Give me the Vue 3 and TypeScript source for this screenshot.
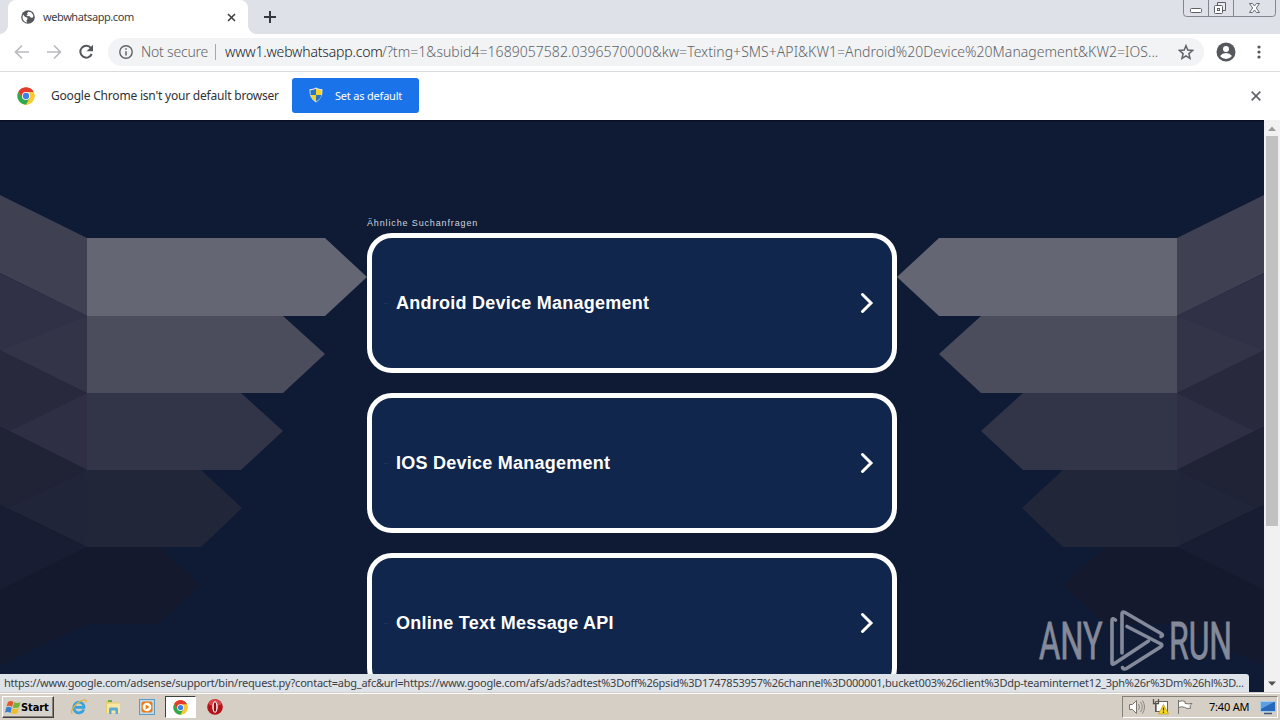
<script setup lang="ts">
interface Shape { points: string; fill: string }

const searches: string[] = [
  'Android Device Management',
  'IOS Device Management',
  'Online Text Message API',
]

// One wing of the folded-ribbon backdrop; the other side is its mirror.
const wing: Shape[] = [
  { points: '0,470 87,427 159,427 201,465 159,504 87,504 0,545', fill: '#14192d' },
  { points: '0,75 87,118 87,196 0,153', fill: '#3f4052' },
  { points: '0,153 87,196 87,273 0,230', fill: '#303146' },
  { points: '87,196 0,231 87,273', fill: '#333448' },
  { points: '0,230 87,273 87,350 0,307', fill: '#28293d' },
  { points: '87,273 10,311 87,350', fill: '#2e2f44' },
  { points: '0,307 87,350 87,427 0,385', fill: '#202235' },
  { points: '87,350 8,388 87,427', fill: '#212539' },
  { points: '0,385 87,427 0,470', fill: '#191d33' },
  { points: '87,118 325,118 367,157 325,196 87,196', fill: '#646673' },
  { points: '87,196 283,196 325,234 283,273 87,273', fill: '#4b4d5c' },
  { points: '87,273 241,273 283,311 241,350 87,350', fill: '#323548' },
  { points: '87,350 201,350 242,388 201,427 87,427', fill: '#222639' },
]
</script>

<template>
  <div class="screen">
    <svg class="defs" width="0" height="0">
      <defs>
        <symbol id="chrome-logo" viewBox="0 0 48 48">
          <circle cx="24" cy="24" r="23" fill="#fbc116" />
          <path d="M24 24 4.1 12.5A23 23 0 0 1 43.9 12.5H24z" fill="#e33b2e" />
          <path d="M4.1 12.5A23 23 0 0 0 24 47L34 29.8 24 24 14 29.8z" fill="#2da94f" />
          <path d="M24 13.5H44.5A23 23 0 0 1 24 47l10-17.2z" fill="#fcc934" />
          <path d="M4.1 12.5A23 23 0 0 1 44.4 13.5H24L14 29.8z" fill="#e33b2e" />
          <circle cx="24" cy="24" r="10.8" fill="#fff" />
          <circle cx="24" cy="24" r="8.4" fill="#3f7fe8" />
        </symbol>
      </defs>
    </svg>

    <header class="tabstrip">
      <div class="tab">
        <svg class="globe" width="14" height="14" viewBox="0 0 14 14">
          <circle cx="7" cy="7" r="6.8" fill="#54585d" />
          <path d="M2 4.5 4.2 7l2 .5.3 1.8-1 1 .4 2.4C3.300 12 1.600 9.800 1.500 7.200zM7.300 1.700 6 3.500l.7 1.200-1.500 1.200 3.500.3 1.200 1.600 2-.2.500-1.500C12 3.500 10 1.600 7.300 1.700z" fill="#fff" />
        </svg>
        <span class="tab-title">webwhatsapp.com</span>
        <svg class="tab-close" width="9" height="9" viewBox="0 0 9 9"><path d="M1 1l7 7M8 1 1 8" stroke="#3c4043" stroke-width="1.6" /></svg>
      </div>
      <svg class="plus" width="12" height="12" viewBox="0 0 12 12"><path d="M6 0v12M0 6h12" stroke="#35393d" stroke-width="2" /></svg>
      <svg class="winbuttons" width="94" height="18" viewBox="0 0 94 18">
        <path d="M.5 0v13.500q0 3 3 3h86q3 0 3-3V0M25.500 0v16.500M50.500 0v16.500" fill="none" stroke="#82868e" />
        <rect x="7.500" y="8.500" width="11" height="4" rx="1" fill="#fff" stroke="#5b5f68" />
        <path d="M34.500 5.500v-3h8v8h-3" fill="#e9ebef" stroke="#5b5f68" />
        <rect x="31.500" y="5.500" width="8" height="8" rx="1" fill="#fff" stroke="#5b5f68" />
        <rect x="34.500" y="8.500" width="2" height="2" fill="none" stroke="#5b5f68" />
        <path d="M66.500 3.500h3l2 2.500 2-2.500h3l-3.200 4.500 3.200 4.500h-3l-2-2.500-2 2.500h-3L69.700 8z" fill="#fff" stroke="#666a72" />
      </svg>
    </header>

    <div class="toolbar">
      <svg class="nav" width="100" height="20" viewBox="0 0 100 20">
        <path d="M29 10H15.800M22 3.500 15.500 10l6.500 6.500M47 10h13.200M54 3.500 60.500 10 54 16.500" fill="none" stroke="#b9bbbe" stroke-width="1.700" />
        <path d="M91 6.200A5.900 5.900 0 1 0 91.700 12" fill="none" stroke="#54585d" stroke-width="2" />
        <path d="M93 2.800v6.400h-6.400z" fill="#54585d" />
      </svg>
      <div class="omnibox">
        <svg class="info" width="14" height="14" viewBox="0 0 14 14"><circle cx="7" cy="7" r="6.200" fill="none" stroke="#5f6368" stroke-width="1.400" /><path d="M7 6.200v4.300M7 3.300v1.500" stroke="#5f6368" stroke-width="1.500" /></svg>
        <span class="insecure">Not secure</span>
        <i class="divider"></i>
        <span class="host">www1.webwhatsapp.com</span><span class="query">/?tm=1&amp;subid4=1689057582.0396570000&amp;kw=Texting+SMS+API&amp;KW1=Android%20Device%20Management&amp;KW2=IOS...</span>
        <svg class="star" width="16" height="16" viewBox="0 0 16 16"><path d="m8 1.700 1.800 4.400 4.700.4-3.600 3.100 1.100 4.700L8 11.800l-4 2.500 1.100-4.700L1.500 6.500l4.700-.4z" fill="none" stroke="#5f6368" stroke-width="1.500" /></svg>
      </div>
      <svg class="avatar" width="20" height="20" viewBox="0 0 20 20"><circle cx="10" cy="10" r="9.500" fill="#54585d" /><circle cx="10" cy="7" r="3" fill="#fff" /><path d="M4 14q2.300-3 6-3t6 3q-2.300 3-6 3t-6-3" fill="#fff" /></svg>
      <svg class="menu" width="4" height="14" viewBox="0 0 4 14"><g fill="#54585d"><circle cx="2" cy="2" r="1.600" /><circle cx="2" cy="7" r="1.600" /><circle cx="2" cy="12" r="1.600" /></g></svg>
    </div>

    <div class="infobar">
      <svg class="logo" width="18" height="18"><use href="#chrome-logo" /></svg>
      <span class="notice">Google Chrome isn't your default browser</span>
      <button class="default-btn">
        <svg width="14" height="16" viewBox="0 0 14 16">
          <path d="M7 .5Q9.500 2.300 13.500 2.300 14 11.500 7 15.500 0 11.500.5 2.300 4.500 2.300 7 .5z" fill="#e6e8e4" />
          <path d="M7 1.800V8H1.500V3.200Q4.800 3.200 7 1.800z" fill="#2b73c7" />
          <path d="M7 1.800V8h5.500V3.200Q9.200 3.200 7 1.800z" fill="#f5d32d" />
          <path d="M7 8H1.600Q2.300 12 7 14.500z" fill="#f5d32d" />
          <path d="M7 8h5.400Q11.700 12 7 14.500z" fill="#2b73c7" />
        </svg>
        <span>Set as default</span>
      </button>
      <svg class="info-close" width="10" height="10" viewBox="0 0 10 10"><path d="m.7.7 8.600 8.600M9.300.7.700 9.300" stroke="#5f6368" stroke-width="1.700" /></svg>
    </div>

    <div class="viewport">
      <main class="page">
        <svg class="backdrop" width="1264" height="572" viewBox="0 0 1264 572">
          <g><polygon v-for="s in wing" :key="s.points" :points="s.points" :fill="s.fill" /></g>
          <g transform="translate(1264 0) scale(-1 1)"><polygon v-for="s in wing" :key="s.points" :points="s.points" :fill="s.fill" /></g>
        </svg>
        <section class="results">
          <p class="caption">Ähnliche Suchanfragen</p>
          <a v-for="term in searches" :key="term" class="card">
            <i class="tick"></i>
            <span class="term">{{ term }}</span>
            <svg width="14" height="22" viewBox="0 0 14 22"><path d="m2.500 2.500 8.500 8.500-8.500 8.500" fill="none" stroke="#fff" stroke-width="3" stroke-linecap="round" /></svg>
          </a>
        </section>
        <svg class="watermark" width="216" height="82" viewBox="1027 600 216 82">
          <g fill="#858a9a" stroke="#858a9a" stroke-width=".8" font-family="Roboto, sans-serif" font-size="51">
            <text transform="translate(1039 659) scale(.64 1)">ANY</text>
            <text transform="translate(1169 659) scale(.625 1)">RUN</text>
          </g>
          <g fill="none" stroke="#858a9a" stroke-width="3.600" stroke-linecap="round" stroke-linejoin="round">
            <path d="M1115.500 620q-3.500-3-3.500 1v42q0 2 2.500.5l34-22.500" />
            <path d="M1122 653v-39q0-3 3-1.500l36 21q3 2 0 3" />
            <path d="m1127 626.500 33 17q3.500 1.500.5 3.500l-34 21.500q-3 1.500-4-1" />
          </g>
        </svg>
        <div class="status"><span>https://www.google.com/adsense/support/bin/request.py?contact=abg_afc&amp;url=https://www.google.com/afs/ads?adtest%3Doff%26psid%3D1747853957%26channel%3D000001,bucket003%26client%3Ddp-teaminternet12_3ph%26r%3Dm%26hl%3D...</span></div>
      </main>
      <aside class="scrollbar">
        <svg width="16" height="16" viewBox="0 0 16 16"><path d="M4 11l4-4.500 4 4.500z" fill="#9c9c9c" /></svg>
        <i class="thumb"></i>
        <svg class="down" width="16" height="16" viewBox="0 0 16 16"><path d="M4 5.500h8L8 9.800z" fill="#505050" /></svg>
      </aside>
    </div>

    <footer class="taskbar">
      <button class="start">
        <svg width="16" height="15" viewBox="0 0 16 15">
          <path d="M3 2q3-2 5.500 0L7 7Q4.500 5 1.500 6.500z" fill="#e2572b" />
          <path d="M9.200 2.200q3 1.500 6.300 0L14 7.200q-3.500 1.500-6.300.2z" fill="#72b43c" />
          <path d="M1.200 7.500Q4 5.800 6.800 8L5.500 13Q3 11.200 0 12.500z" fill="#3b7ed0" />
          <path d="M7.500 8.300q3 1.400 6.300 0l-1.400 5q-3.400 1.400-6.300 0z" fill="#f2bd2b" />
        </svg>
        <b>Start</b>
      </button>
      <div class="launchers">
        <svg width="18" height="18" viewBox="0 0 18 18">
          <path d="M13.800 11.500A5.300 5.300 0 1 1 14 8.200L14 9.300H5" fill="none" stroke="#36a3dc" stroke-width="2.700" />
          <path d="M2.500 15.700C-.5 15 3 8.500 8 4.800 13 1 17.500.8 15.800 4.500" fill="none" stroke="#e4b43c" stroke-width="1.300" />
        </svg>
        <svg width="18" height="18" viewBox="0 0 18 18">
          <path d="M2 3h5l1 1.500h7V15H2z" fill="#e8cb6b" /><path d="M3 5.500h13V15H3z" fill="#f7e7a4" /><path d="M4 2h4v2H4z" fill="#67af50" />
          <path d="M5 16v-5q0-1.500 1.500-1.500h6Q14 9.500 14 11v5h-2.500v-3.500h-4V16z" fill="#5ba9d4" />
        </svg>
        <svg width="18" height="18" viewBox="0 0 18 18">
          <rect x="1.500" y="1.500" width="15" height="15" fill="#bdd9ec" stroke="#5a9bc5" /><rect x="3.500" y="3.500" width="11" height="11" rx="2" fill="#ec7c18" /><circle cx="9" cy="9" r="4.300" fill="#fff" /><path d="m7.600 6.400 4 2.600-4 2.600z" fill="#ec7c18" />
        </svg>
        <div class="active"><svg width="15" height="15"><use href="#chrome-logo" /></svg></div>
        <svg width="18" height="18" viewBox="0 0 18 18">
          <circle cx="9" cy="9" r="7.800" fill="#b5121a" /><path d="M2 6a7.500 7.500 0 0 1 14 0q-7 4-14 0" fill="#d9444a" /><ellipse cx="9" cy="9" rx="2.700" ry="5.800" fill="#fff" /><ellipse cx="9" cy="9" rx="1.300" ry="4.800" fill="#8e0c12" />
        </svg>
      </div>
      <div class="tray">
        <svg width="66" height="18" viewBox="0 0 66 18">
          <path d="M.5 6.500h3l4-4v13l-4-4h-3z" fill="#fff" stroke="#77746f" />
          <path d="M9.500 6q2 3 0 6M11.500 4q3.500 5 0 10M13.500 2.500q4 6.500 0 13" fill="none" stroke="#8b8883" />
          <rect x="26.500" y="3.500" width="12" height="10" fill="#fff" stroke="#66635e" /><path d="M24.500 1v4.500h5V1M27 5.500V13.500" fill="none" stroke="#55524e" stroke-width="1.300" />
          <path d="m34.500 6.500 5 9.500h-10z" fill="#ffdb20" stroke="#bb9b18" stroke-width=".7" /><path d="M34.500 9.500v3M34.500 13.500V15" stroke="#333" stroke-width="1.300" />
          <path d="M49.500 2v14M50 3.500q3-1.500 6 0v1.800q3 1.200 7 0l-2 2.500.5 2.500q-4 .8-6-1-3-1-5.500 0" fill="#fff" stroke="#77746f" />
        </svg>
        <span class="clock">7:40 AM</span>
        <svg class="desktop" width="16" height="15" viewBox="0 0 16 15"><rect x=".5" y="1.500" width="15" height="10" fill="#2768b8" stroke="#a5cbea" /><path d="M1 2h13L1 9z" fill="#5d9fe0" /><path d="M4 13.500h8" stroke="#36577d" stroke-width="1.500" /></svg>
      </div>
    </footer>
  </div>
</template>

<style>
html, body { margin: 0; overflow: hidden; }
</style>

<style scoped>
.screen { width: 1280px; height: 720px; display: flex; flex-direction: column; overflow: hidden; background: #fff; font-family: "Noto Sans", "Open Sans", sans-serif; white-space: nowrap; }
svg { display: block; flex: none; }
.defs { position: absolute; }
button { font: inherit; margin: 0; border: 0; box-sizing: border-box; }
.tabstrip { height: 34px; flex: none; display: flex; background: #dee1e8; padding-left: 8px; }
.tab { position: relative; width: 240px; height: 34px; box-sizing: border-box; background: #fff; border-radius: 8px 8px 0 0; display: flex; align-items: center; padding: 0 12px 0 13px; }
.tab::before, .tab::after { content: ""; position: absolute; bottom: 0; width: 8px; height: 8px; }
.tab::before { left: -8px; background: radial-gradient(circle at 0 0, transparent 7.500px, #fff 8px); }
.tab::after { right: -8px; background: radial-gradient(circle at 100% 0, transparent 7.500px, #fff 8px); }
.tab-title { margin-left: 8px; padding-bottom: 2px; flex: 1; font-size: 11px; letter-spacing: -.42px; color: #3c4043; }
.plus { margin: 11px 0 0 16px; }
.winbuttons { margin-left: auto; margin-right: 3px; }
.toolbar { height: 35px; padding-bottom: 2px; flex: none; display: flex; align-items: center; border-bottom: 1px solid #d9dbdd; }
.nav { margin-right: 8px; }
.omnibox { width: 1096px; height: 28px; box-sizing: border-box; padding-left: 11px; border-radius: 14px; background: #f1f3f4; display: flex; align-items: center; font-size: 14px; color: #5f6368; }
.insecure { margin-left: 8px; width: 68px; font-weight: 300; letter-spacing: -.2px; }
.divider { width: 1px; height: 16px; margin: 0 9px 0 6px; background: #a5a8ac; }
.host { width: 157px; color: #202124; letter-spacing: -.17px; font-weight: 300; }
.query { font-weight: 300; letter-spacing: .04px; }
.star { margin: 0 10px 0 auto; }
.avatar { margin-left: 12px; }
.menu { margin-left: 21px; }
.infobar { height: 48px; flex: none; box-sizing: border-box; padding-bottom: 1px; display: flex; align-items: center; }
.logo { margin-left: 17px; }
.notice { margin-left: 16px; width: 241px; padding-bottom: 1px; font-size: 12px; letter-spacing: -.2px; color: #303134; }
.default-btn { width: 127px; height: 35px; border-radius: 3px; background: #1a73e8; color: #fff; font-size: 11px; letter-spacing: -.2px; display: flex; align-items: center; gap: 12px; padding: 0 0 1px 17px; }
.info-close { margin: 1px 19px 0 auto; }
.viewport { height: 572px; flex: none; display: flex; }
.page { width: 1264px; height: 572px; position: relative; overflow: hidden; background: #0f1b35; box-shadow: inset 0 2px 2px -1px #070d1b; }
.backdrop { position: absolute; inset: 0; }
.results { position: relative; width: 530px; margin: 0 auto; padding-top: 97px; font-family: "Liberation Sans", Arial, sans-serif; }
.caption { margin: 0 0 3px; height: 13px; line-height: 13px; font-size: 9px; letter-spacing: .86px; color: #d0d3dd; }
.card { box-sizing: border-box; width: 530px; height: 140px; margin-bottom: 20px; border: 5px solid #fff; border-radius: 25px; background: #11264c; display: flex; align-items: center; padding: 0 18px 0 12px; }
.tick { width: 4px; height: 1px; margin-right: 8px; background: #1d315b; }
.term { flex: 1; color: #fff; font-size: 18px; font-weight: 700; letter-spacing: .25px; }
.watermark { position: absolute; left: 1027px; top: 480px; }
.status { position: absolute; left: 0; bottom: 0; width: 1249px; height: 18px; line-height: 18px; box-sizing: border-box; padding-left: 4px; border-radius: 0 3px 0 0; background: #dee3e9; color: #3c4043; font-size: 11px; letter-spacing: -.225px; }
.scrollbar { width: 16px; background: #f1f1f1; display: flex; flex-direction: column; }
.thumb { width: 12px; height: 390px; margin-left: 2px; background: #c1c1c1; }
.down { margin-top: auto; }
.taskbar { height: 28px; flex: none; box-sizing: border-box; border-top: 1px solid #d4d0c8; box-shadow: inset 0 1px #fff; background: #d6cfc5; display: flex; align-items: center; padding-top: 1px; }
.start { width: 52px; height: 22px; margin-left: 2px; padding: 0 0 0 2px; display: flex; align-items: center; background: #d6d2ca; border: 1px solid; border-color: #fff #404040 #404040 #fff; box-shadow: inset -1px -1px #858179; color: #000; }
.start b { font: 700 11px "DejaVu Sans Condensed", "DejaVu Sans", sans-serif; letter-spacing: -.1px; }
.launchers { display: flex; align-items: center; margin-left: 16px; gap: 16px; }
.active { width: 31px; height: 22px; box-sizing: border-box; margin: 0 -6px 0 -7px; border: 1px solid; border-color: #404040 #fff #fff #404040; background: #fff; display: flex; align-items: center; justify-content: center; }
.tray { margin-left: auto; width: 156px; height: 22px; margin-right: 2px; box-sizing: border-box; border: 1px solid; border-color: #858179 #fff #fff #858179; display: flex; align-items: center; padding-left: 6px; }
.clock { margin-left: 14px; width: 42px; padding-bottom: 2px; font-size: 11px; letter-spacing: -.2px; color: #000; }
.desktop { margin-left: 9px; }
</style>
